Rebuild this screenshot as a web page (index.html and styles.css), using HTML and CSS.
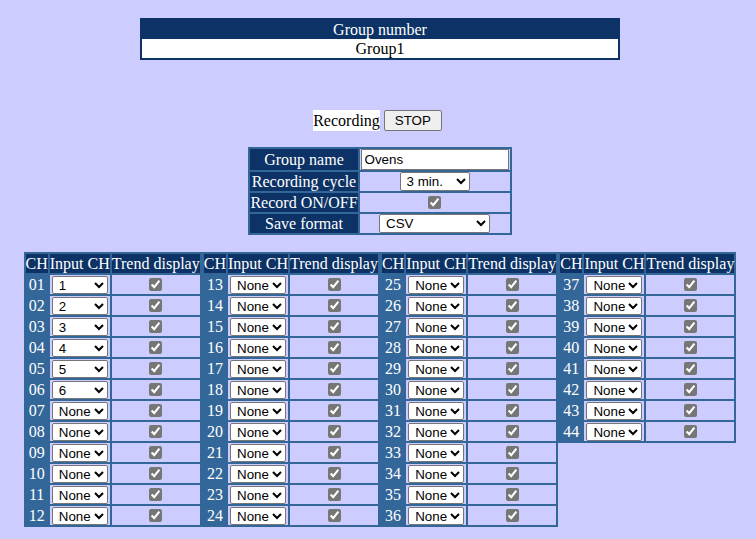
FILE: index.html
```html
<!DOCTYPE html>
<html>
<head>
<meta charset="utf-8">
<link rel="stylesheet" href="styles.css">
</head>
<body>
<table class="grp">
  <tr><th>Group number</th></tr>
  <tr><td>Group1</td></tr>
</table>

<div class="rec"><span class="rec-label">Recording</span> <button class="stop">STOP</button></div>

<table class="set">
  <tr><th>Group name</th><td class="left"><input class="name" type="text" value="Ovens"></td></tr>
  <tr><th>Recording cycle</th><td><select class="cycle"><option>3 min.</option></select></td></tr>
  <tr><th>Record ON/OFF</th><td><input type="checkbox" checked></td></tr>
  <tr><th>Save format</th><td><select class="fmt"><option>CSV</option></select></td></tr>
</table>

<div class="chwrap">
<table class="ch">
  <tr><th>CH</th><th>Input CH</th><th>Trend display</th></tr>
  <tr><td class="n">01</td><td><select><option>1</option></select></td><td><input type="checkbox" checked></td></tr>
  <tr><td class="n">02</td><td><select><option>2</option></select></td><td><input type="checkbox" checked></td></tr>
  <tr><td class="n">03</td><td><select><option>3</option></select></td><td><input type="checkbox" checked></td></tr>
  <tr><td class="n">04</td><td><select><option>4</option></select></td><td><input type="checkbox" checked></td></tr>
  <tr><td class="n">05</td><td><select><option>5</option></select></td><td><input type="checkbox" checked></td></tr>
  <tr><td class="n">06</td><td><select><option>6</option></select></td><td><input type="checkbox" checked></td></tr>
  <tr><td class="n">07</td><td><select><option>None</option></select></td><td><input type="checkbox" checked></td></tr>
  <tr><td class="n">08</td><td><select><option>None</option></select></td><td><input type="checkbox" checked></td></tr>
  <tr><td class="n">09</td><td><select><option>None</option></select></td><td><input type="checkbox" checked></td></tr>
  <tr><td class="n">10</td><td><select><option>None</option></select></td><td><input type="checkbox" checked></td></tr>
  <tr><td class="n">11</td><td><select><option>None</option></select></td><td><input type="checkbox" checked></td></tr>
  <tr><td class="n">12</td><td><select><option>None</option></select></td><td><input type="checkbox" checked></td></tr>
</table>
<table class="ch">
  <tr><th>CH</th><th>Input CH</th><th>Trend display</th></tr>
  <tr><td class="n">13</td><td><select><option>None</option></select></td><td><input type="checkbox" checked></td></tr>
  <tr><td class="n">14</td><td><select><option>None</option></select></td><td><input type="checkbox" checked></td></tr>
  <tr><td class="n">15</td><td><select><option>None</option></select></td><td><input type="checkbox" checked></td></tr>
  <tr><td class="n">16</td><td><select><option>None</option></select></td><td><input type="checkbox" checked></td></tr>
  <tr><td class="n">17</td><td><select><option>None</option></select></td><td><input type="checkbox" checked></td></tr>
  <tr><td class="n">18</td><td><select><option>None</option></select></td><td><input type="checkbox" checked></td></tr>
  <tr><td class="n">19</td><td><select><option>None</option></select></td><td><input type="checkbox" checked></td></tr>
  <tr><td class="n">20</td><td><select><option>None</option></select></td><td><input type="checkbox" checked></td></tr>
  <tr><td class="n">21</td><td><select><option>None</option></select></td><td><input type="checkbox" checked></td></tr>
  <tr><td class="n">22</td><td><select><option>None</option></select></td><td><input type="checkbox" checked></td></tr>
  <tr><td class="n">23</td><td><select><option>None</option></select></td><td><input type="checkbox" checked></td></tr>
  <tr><td class="n">24</td><td><select><option>None</option></select></td><td><input type="checkbox" checked></td></tr>
</table>
<table class="ch">
  <tr><th>CH</th><th>Input CH</th><th>Trend display</th></tr>
  <tr><td class="n">25</td><td><select><option>None</option></select></td><td><input type="checkbox" checked></td></tr>
  <tr><td class="n">26</td><td><select><option>None</option></select></td><td><input type="checkbox" checked></td></tr>
  <tr><td class="n">27</td><td><select><option>None</option></select></td><td><input type="checkbox" checked></td></tr>
  <tr><td class="n">28</td><td><select><option>None</option></select></td><td><input type="checkbox" checked></td></tr>
  <tr><td class="n">29</td><td><select><option>None</option></select></td><td><input type="checkbox" checked></td></tr>
  <tr><td class="n">30</td><td><select><option>None</option></select></td><td><input type="checkbox" checked></td></tr>
  <tr><td class="n">31</td><td><select><option>None</option></select></td><td><input type="checkbox" checked></td></tr>
  <tr><td class="n">32</td><td><select><option>None</option></select></td><td><input type="checkbox" checked></td></tr>
  <tr><td class="n">33</td><td><select><option>None</option></select></td><td><input type="checkbox" checked></td></tr>
  <tr><td class="n">34</td><td><select><option>None</option></select></td><td><input type="checkbox" checked></td></tr>
  <tr><td class="n">35</td><td><select><option>None</option></select></td><td><input type="checkbox" checked></td></tr>
  <tr><td class="n">36</td><td><select><option>None</option></select></td><td><input type="checkbox" checked></td></tr>
</table>
<table class="ch">
  <tr><th>CH</th><th>Input CH</th><th>Trend display</th></tr>
  <tr><td class="n">37</td><td><select><option>None</option></select></td><td><input type="checkbox" checked></td></tr>
  <tr><td class="n">38</td><td><select><option>None</option></select></td><td><input type="checkbox" checked></td></tr>
  <tr><td class="n">39</td><td><select><option>None</option></select></td><td><input type="checkbox" checked></td></tr>
  <tr><td class="n">40</td><td><select><option>None</option></select></td><td><input type="checkbox" checked></td></tr>
  <tr><td class="n">41</td><td><select><option>None</option></select></td><td><input type="checkbox" checked></td></tr>
  <tr><td class="n">42</td><td><select><option>None</option></select></td><td><input type="checkbox" checked></td></tr>
  <tr><td class="n">43</td><td><select><option>None</option></select></td><td><input type="checkbox" checked></td></tr>
  <tr><td class="n">44</td><td><select><option>None</option></select></td><td><input type="checkbox" checked></td></tr>
</table>
</div>
</body>
</html>
```
FILE: styles.css
```css
html, body {
  background: #ccccff;
}
body {
  margin: 8px;
  padding-left: 4px;
  font-family: "Liberation Serif", "Times New Roman", serif;
  font-size: 16px;
  color: #000;
}
table {
  font-size: 16px;
}
th {
  font-weight: normal;
}

/* Group number */
.grp {
  width: 480px;
  margin: 10px auto 0;
  border: 2px solid #0d3366;
  border-collapse: collapse;
}
.grp th {
  background: #0d3366;
  color: #fff;
  height: 19px;
  padding: 0;
  line-height: 19px;
}
.grp td {
  background: #fff;
  text-align: center;
  height: 19px;
  padding: 0;
  line-height: 19px;
}

/* Recording */
.rec {
  margin-top: 50px;
  padding-right: 5px;
  height: 21px;
  display: flex;
  justify-content: center;
  align-items: center;
  gap: 4px;
}
.rec-label {
  background: #fff;
  line-height: 21px;
  padding: 0;
}
.stop {
  font-family: "Liberation Sans", Arial, sans-serif;
  font-size: 13.33px;
  width: 58px;
  height: 21px;
  padding: 0;
  margin: 0;
  background: #efefef;
  border: 1px solid #767676;
  border-radius: 2px;
  color: #000;
}

/* Settings */
.set {
  margin: 16px auto 0;
  border-collapse: separate;
  border-spacing: 2px;
  background: #336699;
}
.set th {
  background: #0d3366;
  color: #fff;
  padding: 0;
  height: 19px;
  line-height: 19px;
  white-space: nowrap;
}
.set td {
  background: #ccccff;
  padding: 0;
  height: 19px;
  width: 150px;
}
select {
  font-family: "Liberation Sans", Arial, sans-serif;
  font-size: 13.33px;
  height: 18px;
  margin: 0 auto;
  padding: 0 0 0 2px;
  border: 1px solid #767676;
  border-radius: 2px;
  background: #fff;
  color: #000;
  box-sizing: border-box;
  display: block;
}
.name {
  font-family: "Liberation Sans", Arial, sans-serif;
  font-size: 13.33px;
  box-sizing: border-box;
  width: 148px;
  height: 21px;
  margin: 0 0 0 1px;
  padding: 1px 3px;
  border: 1px solid #767676;
  display: block;
}
.cycle {
  width: 70px;
  height: 19px;
}
.fmt {
  width: 111px;
  height: 19px;
}
input[type="checkbox"] {
  margin: 0 auto;
  width: 13px;
  height: 13px;
  display: block;
  accent-color: #767676;
}

/* Channel tables */
.chwrap {
  margin-top: 17px;
  display: flex;
  justify-content: center;
  align-items: flex-start;
  gap: 0;
}
.ch {
  border-collapse: separate;
  border-spacing: 2px;
  background: #336699;
}
.ch th {
  background: #0d3366;
  color: #fff;
  padding: 0;
  height: 19px;
  line-height: 19px;
  white-space: nowrap;
}
.ch th:last-child {
  width: 88px;
}
.ch td {
  background: #ccccff;
  text-align: center;
  padding: 0;
  height: 19px;
  line-height: 19px;
}
.ch td.n {
  background: #336699;
  color: #fff;
}
.ch select {
  width: 56px;
}
```
